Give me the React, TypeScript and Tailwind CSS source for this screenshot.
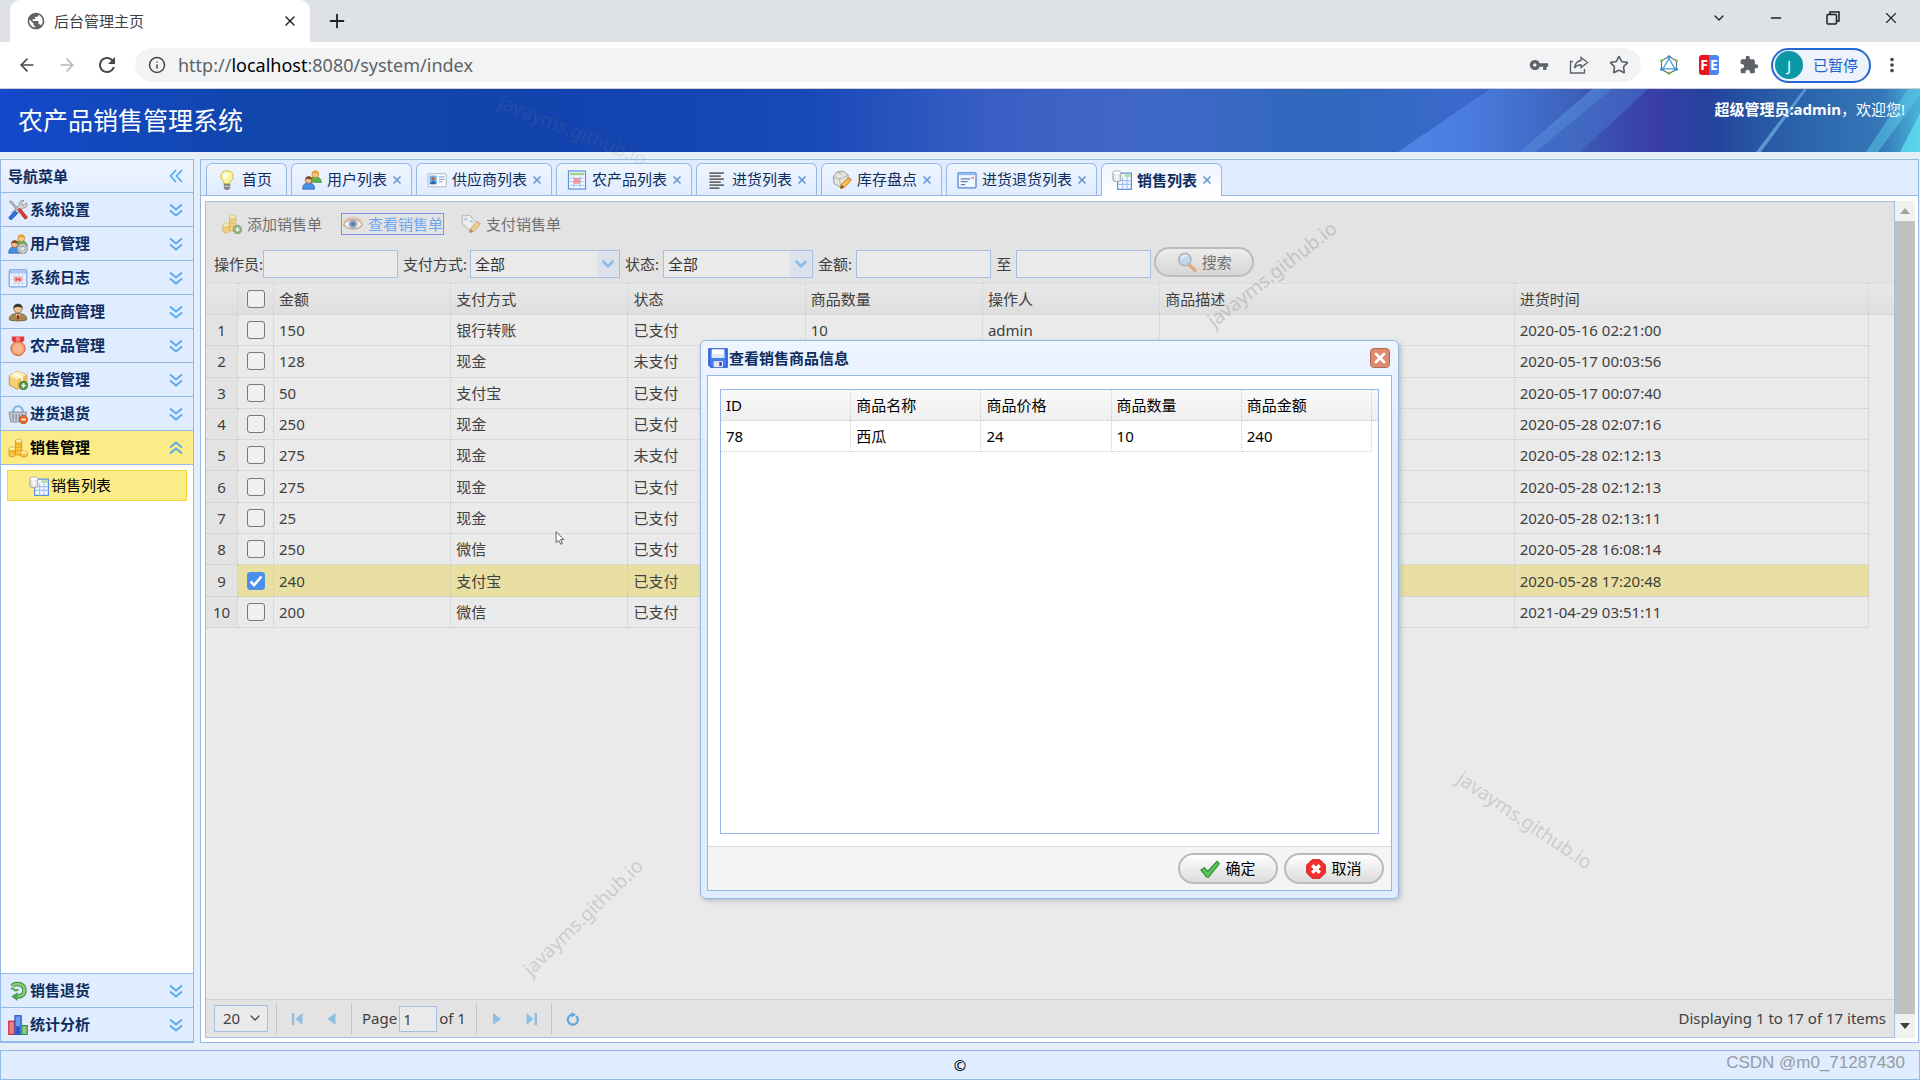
import React, { useState } from 'react';
import { ArrowLeft, ArrowRight, ChevronDown, Info, Minus, Plus, Star, X } from 'lucide-react';
import { MdMoreVert, MdPublic, MdRefresh, MdVpnKey } from 'react-icons/md';

type IconName =
  | 'tools' | 'usersGear' | 'calendar' | 'agent' | 'medal' | 'boxAdd' | 'basket' | 'coins' | 'tableDb'
  | 'recycle' | 'chart' | 'bulb' | 'users' | 'vcard' | 'report' | 'lines' | 'dbEdit' | 'form'
  | 'coinsAdd' | 'eye' | 'tagEdit' | 'search' | 'disk' | 'ok' | 'cancel';

const plusBadge = (
  <>
    <circle cx="12.4" cy="12.4" r="3.4" fill="#4f9a45" stroke="#2f6f2a" strokeWidth=".6" />
    <path d="M12.4 10.6v3.6M10.6 12.4h3.6" stroke="#fff" strokeWidth="1.2" />
  </>
);

const pencil = (
  <>
    <path d="M6.8 14.8l.8-3.2 5-5.2 2.5 2.2-5.2 5.3z" fill="#f7c050" stroke="#b9791e" strokeWidth=".7" />
    <path d="M6.8 14.8l.8-3.2 2.3 2.3z" fill="#8a5a2a" />
    <path d="M12.4 6.5l1.1-1 2.4 2.1-1 1.1z" fill="#e88a7a" />
  </>
);

const coinStacks = (
  <>
    <path d="M6 2.2c0-1.6 5-1.6 5 0v10.5c0 1.4-5 1.4-5 0z" fill="#f9c440" stroke="#d08e12" strokeWidth=".6" />
    <ellipse cx="8.5" cy="2.3" rx="2.4" ry="1.1" fill="#fff0a8" />
    <path d="M.8 8.4c0-1.6 5-1.6 5 0v5.6c0 1.4-5 1.4-5 0z" fill="#f9c440" stroke="#d08e12" strokeWidth=".6" />
    <ellipse cx="3.3" cy="8.5" rx="2.4" ry="1.1" fill="#fff0a8" />
    <path d="M6 5h5M6 7.5h5M6 10h5M.8 11h5" stroke="#e2a322" strokeWidth=".7" />
  </>
);

const people = (
  <>
    <path d="M6 9.6c0-3 2-4.2 4.4-4.2s5 1.2 5 4.6z" fill="#5fb648" stroke="#3a8a2a" strokeWidth=".6" />
    <circle cx="10.6" cy="3.4" r="2.7" fill="#f8c88c" stroke="#c07a20" strokeWidth=".6" />
    <path d="M7.9 3c.2-3.4 5.3-3.4 5.5 0-1.5.3-3.6-1-5.5 0z" fill="#e9a22c" />
    <path d="M.6 15.3c-.2-3.6 1.800-5 4.700-5s4.900 1.400 4.700 5z" fill="#4a90e2" stroke="#2460b0" strokeWidth=".6" />
    <circle cx="5.3" cy="8" r="2.7" fill="#f8c08c" stroke="#a05a30" strokeWidth=".6" />
    <path d="M2.600 7.600c.2-3.600 5.300-3.600 5.500 0-1.500.3-3.600-1-5.500 0z" fill="#8a4a2a" />
  </>
);

const icons: Record<IconName, React.ReactNode> = {
  tools: (
    <>
      <path d="M14.8 2.2l-2 2-1.6-.4-.4-1.6 2-1.8c-2-.7-4.2.9-3.7 3.2L3 10.2l2.4 2.4 6.8-6.3c2.2.3 3.8-2 2.6-4.1z" fill="#d5d5d5" stroke="#888" strokeWidth=".7" />
      <path d="M1 1.2l1.6-.6 5 6-1 .9z" fill="#bbb" stroke="#777" strokeWidth=".5" />
      <path d="M7.8 7.8l1.8-1.2 5.6 6.6c.6 1.4-1 2.5-2 1.7z" fill="#e23c32" stroke="#a01c18" strokeWidth=".5" />
      <path d="M5.6 8.6l2.2 2-4.8 5c-1.2.6-2.7-.9-2.2-2z" fill="#2f6fe0" stroke="#1a46a8" strokeWidth=".5" />
    </>
  ),
  usersGear: (
    <>
      {people}
      <circle cx="11.6" cy="11.6" r="3" fill="none" stroke="#9a9a9a" strokeWidth="2.4" />
      <circle cx="11.6" cy="11.6" r="4.2" fill="none" stroke="#9a9a9a" strokeWidth="1" strokeDasharray="1.6 1.6" />
      <circle cx="11.6" cy="11.6" r="2.9" fill="none" stroke="#ddd" strokeWidth="1" />
    </>
  ),
  calendar: (
    <>
      <rect x="1" y="1.5" width="14" height="13.5" rx="1" fill="#eef5ff" stroke="#7aa4de" />
      <path d="M1.5 2h13v2.500h-13z" fill="#a9c8f2" />
      <path d="M2.5 6.5h11M2.5 9.3h11M2.5 12.2h11M5.5 5v9M8.5 5v9M11.5 5v9" stroke="#bcd2f0" strokeWidth=".7" />
      <rect x="4.500" y="7" width="7" height="4" fill="#f6b0b0" />
      <path d="M6.500 7.500v3M9.500 7.500v3M6.500 9h3" stroke="#e45b5b" strokeWidth="1.2" />
    </>
  ),
  agent: (
    <>
      <path d="M1 14.2c0-3.4 2.5-5 7-5s7 1.6 7 5c-3 1.2-11 1.2-14 0z" fill="#a58a52" stroke="#6e5a2c" strokeWidth=".7" />
      <path d="M6 9.3l2 3.8 2-3.8z" fill="#e8dcc0" />
      <path d="M7.4 10h1.2l.4 3-1 1-1-1z" fill="#b02020" />
      <circle cx="8" cy="5.4" r="3.4" fill="#f3c094" stroke="#6a4020" strokeWidth=".5" />
      <path d="M4.3 5.2C3.8.2 12.2.2 11.7 5.2c-1.3-1.6-5.8-1.6-7.4 0z" fill="#3a3a3a" />
    </>
  ),
  medal: (
    <>
      <path d="M3 .3h10v3.2L10.5 5.5h-5L3 3.5z" fill="#e8343a" />
      <path d="M6.3.3h3.4v5H6.3z" fill="#ff7a7a" />
      <circle cx="8" cy="10" r="5.7" fill="#f59a6a" stroke="#d2643a" strokeWidth=".8" />
      <circle cx="8" cy="10" r="4" fill="#f8b48a" />
    </>
  ),
  boxAdd: (
    <>
      <path d="M1 4.5L8 .8l7 3.2v7.5l-7.5 4L1 12z" fill="#f6cf78" stroke="#c08a2a" strokeWidth=".7" />
      <path d="M1 4.5L8 .8 15 4 7.5 8z" fill="#fdeebc" />
      <path d="M7.5 8v7.5L15 11.5V4z" fill="#f0ba55" />
      <path d="M4.3 2.7l7 3.4v3" fill="none" stroke="#fff" strokeWidth="1.2" />
      {plusBadge}
    </>
  ),
  basket: (
    <>
      <path d="M4 7c0-7 8-7 8 0" fill="none" stroke="#7fb2d6" strokeWidth="1.6" />
      <path d="M.8 6.5h14l-1.3 7.8H2.2z" fill="#c3ccd6" stroke="#8592a2" strokeWidth=".8" />
      <path d="M4 8v5M6.5 8v5M9 8v5M11.5 8v5" stroke="#7d8a9a" strokeWidth=".9" />
      <circle cx="12.4" cy="12.4" r="3.3" fill="#ea6a2c" stroke="#b5431a" strokeWidth=".6" />
      <path d="M10.6 12.4h3.6" stroke="#fff" strokeWidth="1.3" />
    </>
  ),
  coins: (
    <>
      {coinStacks}
      <path d="M10 11.5c0-1.4 5.4-1.4 5.4 0v2.6c0 1.4-5.4 1.4-5.4 0z" fill="#f9c440" stroke="#d08e12" strokeWidth=".6" />
      <ellipse cx="12.7" cy="11.6" rx="2.5" ry="1" fill="#fff0a8" />
    </>
  ),
  tableDb: (
    <>
      <rect x="4.5" y="2.5" width="11" height="13" fill="#f4f9ff" stroke="#5f93dc" />
      <path d="M10 3.5h5v2h-5z" fill="#a9dba0" />
      <path d="M5 8.5h10M5 11.5h10M8.5 6v9M12 6v9" stroke="#9dc0ee" strokeWidth=".9" />
      <path d="M.7 2c0-1.6 6.300-1.600 6.300 0v6c0 1.700-6.300 1.700-6.300 0z" fill="#e2e2e2" stroke="#9a9a9a" strokeWidth=".7" />
      <ellipse cx="3.9" cy="2.1" rx="2.9" ry="1" fill="#fff" />
      <path d="M3.9 3.5v4.5" stroke="#fff" strokeWidth="1.5" />
    </>
  ),
  recycle: (
    <>
      <path d="M3.500 4.200C5.500 1.200 13.200 1.800 13.200 7.600c0 3.600-3.200 4.900-6.700 4.700" fill="none" stroke="#3d8f3c" strokeWidth="3.600" />
      <path d="M3.500 4.200C5.500 1.200 13.200 1.800 13.200 7.600c0 3.600-3.200 4.900-6.700 4.700" fill="none" stroke="#8ac880" strokeWidth="2" />
      <path d="M7.600 9v7L2.600 12.400z" fill="#4f9f4c" />
      <path d="M2.500 5.500l3.500 2 2.500-.3" fill="none" stroke="#5aa854" strokeWidth="1.800" />
    </>
  ),
  chart: (
    <>
      <rect x=".6" y="5" width="4.6" height="10.5" fill="#f08080" stroke="#c8303a" />
      <rect x="5.6" y=".6" width="4.9" height="14.9" fill="#6a9cf0" stroke="#2458c0" />
      <path d="M6.5 9h3v6h-3z" fill="#2a54c8" />
      <rect x="11" y="8.5" width="4.4" height="7" fill="#8fce84" stroke="#3d9140" />
    </>
  ),
  bulb: (
    <>
      <path d="M8 .6c-5.700 0-6 5.600-3.300 8 .7.700.8 1.500.9 2.400h4.800c.1-.9.2-1.700.9-2.400C14 6.200 13.700.6 8 .6z" fill="#fbf3a0" stroke="#c9b84a" strokeWidth=".8" />
      <ellipse cx="7" cy="4.4" rx="2" ry="2.4" fill="#fffde0" />
      <path d="M5.8 11.5h4.4v2.8L9 15.6H7l-1.2-1.3z" fill="#8b8b8b" stroke="#555" strokeWidth=".5" />
      <path d="M5.8 13h4.4" stroke="#ddd" strokeWidth=".7" />
    </>
  ),
  users: people,
  vcard: (
    <>
      <rect x=".8" y="3" width="14.6" height="10.4" rx=".8" fill="#fdfdfd" stroke="#b0b8c2" strokeWidth=".8" />
      <rect x="2" y="4.4" width="5.8" height="7" fill="#6eb0ec" />
      <circle cx="4.9" cy="7" r="1.4" fill="#b5683a" />
      <path d="M2.6 11.4c0-3.600 4.600-3.600 4.600 0z" fill="#2a64b4" />
      <path d="M9.5 5.5h4.500M9.5 7.5h4.500M9.5 9.5h3" stroke="#9ab0c8" strokeWidth=".9" />
    </>
  ),
  report: (
    <>
      <rect x="1.2" y=".8" width="13.6" height="14.4" fill="#f4f9ff" stroke="#5f93dc" />
      <path d="M2.5 2.2h11v2h-11z" fill="#9fd08e" />
      <path d="M2.5 6.5h11M2.5 9.3h11M2.5 12.2h11M5.5 5v9M10.5 5v9" stroke="#9dc0ee" strokeWidth=".8" />
      <rect x="5.5" y="6.5" width="5" height="4.5" fill="#f29a9a" />
    </>
  ),
  lines: (
    <path d="M2 2.500h11.500M2 4.900h9M2 7.300h11.500M2 9.700h9M2 12.100h11.500M2 14.500h8" stroke="#6c6c6c" strokeWidth="1.400" />
  ),
  dbEdit: (
    <>
      <path d="M1 5.500L4 1.600 9 .8l4 3.400-.5 6L7 14 1.800 11z" fill="#e6e6e0" stroke="#a09a8a" strokeWidth=".8" />
      <path d="M1 5.5l5 1.8 7-3.1M6 7.3L7 14M4 1.6l4 1.8" fill="none" stroke="#b5b0a2" strokeWidth=".8" />
      {pencil}
    </>
  ),
  form: (
    <>
      <rect x=".8" y="2.2" width="14.4" height="12" rx=".6" fill="#f2f8ff" stroke="#4f83d0" />
      <path d="M1.4 2.8h13.2v1.3H1.4z" fill="#8fb8ee" />
      <path d="M3 7h7.5M3 9.3h5.5M3 11.6h3.5" stroke="#5a7fb5" strokeWidth="1" />
      <rect x="11.4" y="5.4" width="2.2" height="2" fill="#f2a0a0" />
    </>
  ),
  coinsAdd: (
    <>
      {coinStacks}
      {plusBadge}
    </>
  ),
  eye: (
    <>
      <path d="M.5 8.3C3.5 3 12.5 3 15.5 8.3 12.5 13.2 3.5 13.2.5 8.3z" fill="#fff" stroke="#c08a5a" strokeWidth="1.2" />
      <path d="M.8 6C4 1.800 12 1.800 15.2 6" fill="none" stroke="#dcb48c" strokeWidth="1.2" />
      <circle cx="8" cy="8" r="3.5" fill="#5a88c8" />
      <circle cx="8" cy="8" r="1.6" fill="#14284a" />
    </>
  ),
  tagEdit: (
    <>
      <path d="M1 1.500l6-.5 7 7.500-5.800 6L1 7.500z" fill="#f5f5f2" stroke="#a8a8a0" strokeWidth=".9" />
      <circle cx="3.8" cy="4" r="1.3" fill="#8ac2e8" />
      <path d="M6 6l2.500-1.500 2 3z" fill="#8ac2e8" />
      {pencil}
    </>
  ),
  search: (
    <>
      <path d="M9.5 10l4.8 4.6" stroke="#e08a3a" strokeWidth="2.8" strokeLinecap="round" />
      <circle cx="6.3" cy="6" r="4.9" fill="#a9d2f8" stroke="#8a9cb4" strokeWidth="1.3" />
      <path d="M3.5 5.5c.5-2 2.5-3 4.5-2.3" fill="none" stroke="#fff" strokeWidth="1.2" />
    </>
  ),
  disk: (
    <>
      <path d="M.7.7h14.6v14.6H2.5L.7 13.7z" fill="#3f7fee" stroke="#1d4fc0" />
      <path d="M3 1h10v7H3z" fill="#fff" />
      <path d="M3 5h10v3H3z" fill="#dce8fa" />
      <path d="M4.5 10.5H12v4.8H4.5z" fill="#e6e2f2" />
      <path d="M9 11.300h2v3H9z" fill="#3a3ac8" />
    </>
  ),
  ok: (
    <path d="M.8 8.8l2.6-1.9 2.8 3L13.6 1.8l1.8 2L6.8 14.6H5.4z" fill="#5fc35a" stroke="#2c8a30" strokeWidth=".9" />
  ),
  cancel: (
    <>
      <path d="M4.8.6h6.4l4.2 4.2v6.4l-4.2 4.2H4.8L.6 11.2V4.8z" fill="#f2312e" stroke="#d01714" strokeWidth=".8" />
      <path d="M5 5l6 6M11 5l-6 6" stroke="#fff" strokeWidth="2.6" />
    </>
  ),
};

const Icon: React.FC<{ name: IconName; className?: string }> = ({ name, className = '' }) => (
  <svg viewBox="0 0 16 16" className={`w-5 h-5 shrink-0 ${className}`} aria-hidden="true">
    {icons[name]}
  </svg>
);

const Chevrons: React.FC<{ dir: 'down' | 'up' | 'left' }> = ({ dir }) => (
  <svg viewBox="0 0 14 14" className="w-3.5 h-3.5 shrink-0" fill="none" stroke="#58a9ea" strokeWidth="1.8" aria-hidden="true">
    {dir === 'down' && <path d="M1 1.5l6 5 6-5M1 7.5l6 5 6-5" />}
    {dir === 'up' && <path d="M1 6.5l6-5 6 5M1 12.5l6-5 6 5" />}
    {dir === 'left' && <path d="M7 1L1.5 7 7 13M13 1L7.5 7l5.5 6" />}
  </svg>
);

const topMenus: { icon: IconName; label: string }[] = [
  { icon: 'tools', label: '系统设置' },
  { icon: 'usersGear', label: '用户管理' },
  { icon: 'calendar', label: '系统日志' },
  { icon: 'agent', label: '供应商管理' },
  { icon: 'medal', label: '农产品管理' },
  { icon: 'boxAdd', label: '进货管理' },
  { icon: 'basket', label: '进货退货' },
];

const bottomMenus: { icon: IconName; label: string }[] = [
  { icon: 'recycle', label: '销售退货' },
  { icon: 'chart', label: '统计分析' },
];

const tabs: { icon: IconName; label: string; closable: boolean }[] = [
  { icon: 'bulb', label: '首页', closable: false },
  { icon: 'users', label: '用户列表', closable: true },
  { icon: 'vcard', label: '供应商列表', closable: true },
  { icon: 'report', label: '农产品列表', closable: true },
  { icon: 'lines', label: '进货列表', closable: true },
  { icon: 'dbEdit', label: '库存盘点', closable: true },
  { icon: 'form', label: '进货退货列表', closable: true },
  { icon: 'tableDb', label: '销售列表', closable: true },
];

const orders = [
  { amount: 150, pay: '银行转账', status: '已支付', count: '10', operator: 'admin', time: '2020-05-16 02:21:00' },
  { amount: 128, pay: '现金', status: '未支付', count: '', operator: '', time: '2020-05-17 00:03:56' },
  { amount: 50, pay: '支付宝', status: '已支付', count: '', operator: '', time: '2020-05-17 00:07:40' },
  { amount: 250, pay: '现金', status: '已支付', count: '', operator: '', time: '2020-05-28 02:07:16' },
  { amount: 275, pay: '现金', status: '未支付', count: '', operator: '', time: '2020-05-28 02:12:13' },
  { amount: 275, pay: '现金', status: '已支付', count: '', operator: '', time: '2020-05-28 02:12:13' },
  { amount: 25, pay: '现金', status: '已支付', count: '', operator: '', time: '2020-05-28 02:13:11' },
  { amount: 250, pay: '微信', status: '已支付', count: '', operator: '', time: '2020-05-28 16:08:14' },
  { amount: 240, pay: '支付宝', status: '已支付', count: '', operator: '', time: '2020-05-28 17:20:48' },
  { amount: 200, pay: '微信', status: '已支付', count: '', operator: '', time: '2021-04-29 03:51:11' },
];

const BrowserChrome = () => (
  <div className="shrink-0 bg-white border-b border-[#d0cfd4]">
    <div className="h-[42px] bg-[#dee1e6] flex items-end pl-2.5">
      <div className="w-[300px] h-[42px] bg-white rounded-t-[10px] flex items-center pl-4 pr-3 text-[15px] text-[#3c4043]">
        <MdPublic className="w-5 h-5 text-[#5f6368]" />
        <span className="ml-2 flex-1">后台管理主页</span>
        <button aria-label="关闭标签页"><X className="w-4 h-4 text-[#202124]" /></button>
      </div>
      <button aria-label="新标签页" className="h-[42px] ml-4"><Plus className="w-[22px] h-[22px] text-[#202124]" /></button>
      <div className="ml-auto self-start h-9 flex items-center gap-[41px] pr-5 text-[#202124]">
        <button aria-label="搜索标签页"><ChevronDown className="w-4 h-4" strokeWidth={2} /></button>
        <button aria-label="最小化"><Minus className="w-4 h-4" strokeWidth={2} /></button>
        <button aria-label="还原">
          <svg viewBox="0 0 16 16" className="w-4 h-4" fill="none" stroke="currentColor" strokeWidth="1.5">
            <rect x="2" y="4.5" width="9.5" height="9.5" rx="1" />
            <path d="M5 4.5V2h9v9h-2.5" />
          </svg>
        </button>
        <button aria-label="关闭"><X className="w-[18px] h-[18px]" strokeWidth={1.5} /></button>
      </div>
    </div>
    <div className="h-[46px] flex items-center pl-[17px] text-[#45494d]">
      <button aria-label="后退"><ArrowLeft className="w-5 h-5" /></button>
      <button aria-label="前进" className="ml-5"><ArrowRight className="w-5 h-5 text-[#b4b7ba]" /></button>
      <button aria-label="刷新" className="ml-[18px]"><MdRefresh className="w-6 h-6" /></button>
      <div className="ml-4 flex-1 h-[34px] rounded-full bg-[#f1f3f4] flex items-center pl-[13px] pr-3">
        <Info className="w-[18px] h-[18px]" />
        <div className="ml-3 flex-1 text-[18px] leading-6 text-[#5f6368]">
          http://<span className="text-black">localhost</span>:8080/system/index
        </div>
        <div className="flex items-center gap-5 text-[#5f6368]">
          <MdVpnKey className="w-5 h-5" />
          <svg viewBox="0 0 20 20" className="w-5 h-5" fill="none" stroke="currentColor" strokeWidth="1.4">
            <path d="M4 6.5H1.5V18h14v-4" />
            <path d="M12 2.5l6.5 5-6.5 5V9.7c-3 0-5 1-6.500 3.300.5-4.500 3-7 6.500-7.500z" />
          </svg>
          <Star className="w-5 h-5" />
        </div>
      </div>
      <div className="flex items-center ml-[18px]">
        <svg viewBox="0 0 20 20" className="w-5 h-5" fill="none">
          <path d="M10 1.5l7.500 4.300v8.500L10 18.500l-7.500-4.200V5.800z" stroke="#6a7480" strokeWidth="1.2" />
          <path d="M10 3.5l6 10.3H4z" stroke="#3fa0e0" strokeWidth="1.3" />
          <circle cx="10" cy="1.8" r="1.6" fill="#2a8fd8" />
          <circle cx="2.6" cy="5.8" r="1.5" fill="#78c04a" />
          <circle cx="17.4" cy="5.8" r="1.5" fill="#78c04a" />
          <circle cx="2.6" cy="14.2" r="1.5" fill="#2a8fd8" />
          <circle cx="17.4" cy="14.2" r="1.5" fill="#2a8fd8" />
          <circle cx="10" cy="18.2" r="1.6" fill="#78c04a" />
        </svg>
        <div className="ml-5 w-5 h-5 rounded-[3px] overflow-hidden flex text-[14px] leading-5 font-bold text-white text-center">
          <span className="w-1/2 bg-[#f0101c]">F</span>
          <span className="w-1/2 bg-[#4a86ee]">E</span>
        </div>
        <svg viewBox="0 0 24 24" className="ml-5 w-5 h-5" fill="#5f6368">
          <path d="M20.5 11H19V7c0-1.1-.9-2-2-2h-4V3.5C13 2.12 11.88 1 10.5 1S8 2.12 8 3.5V5H4c-1.1 0-1.990.9-1.990 2v3.800H3.500c1.490 0 2.700 1.210 2.700 2.700s-1.210 2.700-2.700 2.700H2V20c0 1.100.9 2 2 2h3.800v-1.500c0-1.490 1.210-2.700 2.700-2.700 1.490 0 2.700 1.210 2.700 2.700V22H17c1.100 0 2-.9 2-2v-4h1.500c1.380 0 2.500-1.120 2.500-2.500S21.880 11 20.500 11z" />
        </svg>
        <button className="ml-3 h-[35px] rounded-full border-2 border-[#2468d6] bg-[#eef2fa] flex items-center pl-0.5 pr-[11px] text-[15px] text-[#1a62d0]">
          <span className="w-7 h-7 rounded-full bg-[#0b98a5] text-white leading-7">J</span>
          <span className="ml-2.5">已暂停</span>
        </button>
        <button aria-label="菜单" className="ml-2.5 mr-[17px]"><MdMoreVert className="w-[22px] h-[22px]" /></button>
      </div>
    </div>
  </div>
);

const Header = () => (
  <header className="relative shrink-0 h-[63px] overflow-hidden">
    <svg viewBox="0 0 1920 63" preserveAspectRatio="none" className="absolute inset-0 w-full h-full" aria-hidden="true">
      <defs>
        <linearGradient id="sky" x1="0" x2="1">
          <stop offset="0" stopColor="#1449cc" />
          <stop offset=".13" stopColor="#1146ac" />
          <stop offset=".3" stopColor="#1243ae" />
          <stop offset=".42" stopColor="#1749b8" />
          <stop offset=".52" stopColor="#3a5fc4" />
          <stop offset=".6" stopColor="#4068c8" />
          <stop offset=".69" stopColor="#2f68bc" />
          <stop offset=".76" stopColor="#3a6acc" />
          <stop offset=".82" stopColor="#3a5cb4" />
          <stop offset=".86" stopColor="#3b3ea8" />
          <stop offset=".89" stopColor="#23439c" />
          <stop offset=".93" stopColor="#2a60a8" />
          <stop offset=".98" stopColor="#3577b8" />
          <stop offset="1" stopColor="#4ab4d8" />
        </linearGradient>
        <linearGradient id="beam" x1="0" x2="1">
          <stop offset="0" stopColor="#5b93f4" stopOpacity=".7" />
          <stop offset="1" stopColor="#5b93f4" stopOpacity="0" />
        </linearGradient>
      </defs>
      <rect width="1920" height="63" fill="url(#sky)" />
      <path d="M1490 0h110l-80 63h-122z" fill="url(#beam)" />
      <path d="M1592 0h20l-76 63h-16z" fill="#5c9ae6" opacity=".5" />
      <path d="M1612 0h36l-68 63h-44z" fill="#4878d0" opacity=".5" />
      <path d="M1804 0h3l-46 63h-5z" fill="#6fb0e0" opacity=".7" />
      <path d="M1908 0h12v6l-42 57h-12z" fill="#5ccbe8" opacity=".5" />
      <path d="M1920 24v39h-20z" fill="#5fe6f4" opacity=".7" />
    </svg>
    <div className="relative flex justify-between pl-[18px] pr-[15px] text-white">
      <h1 className="text-[25px] leading-[63px]">农产品销售管理系统</h1>
      <div className="pt-2.5 text-[15px] leading-5"><strong>超级管理员:admin</strong>，欢迎您!</div>
    </div>
  </header>
);

const MenuHeader: React.FC<{ icon: IconName; label: string; active?: boolean }> = ({ icon, label, active }) => (
  <button
    className={`w-full h-[34px] shrink-0 flex items-center pl-[7px] pr-2.5 border-b border-[#95b8e7] text-[15px] font-bold ${
      active ? 'bg-[#fbec88] text-black' : 'bg-[#e0ecff] text-[#0e2d5f]'
    }`}
  >
    <Icon name={icon} />
    <span className="ml-0.5 flex-1 text-left">{label}</span>
    <Chevrons dir={active ? 'up' : 'down'} />
  </button>
);

const Sidebar = () => (
  <nav className="w-[194px] shrink-0 flex flex-col border border-[#95b8e7] bg-white">
    <div className="h-[33px] shrink-0 flex items-center justify-between pl-[7px] pr-2.5 bg-gradient-to-b from-[#eff5ff] to-[#e0ecff] border-b border-[#95b8e7] text-[15px] font-bold text-[#0e2d5f]">
      导航菜单
      <button aria-label="收起菜单"><Chevrons dir="left" /></button>
    </div>
    {topMenus.map((m) => (
      <MenuHeader key={m.label} icon={m.icon} label={m.label} />
    ))}
    <MenuHeader icon="coins" label="销售管理" active />
    <div className="flex-1 px-[6px] pt-[5px]">
      <a href="#sales" className="h-[31px] flex items-center pl-[21px] bg-[#fbec88] border border-[#f3d737] text-[15px] text-black">
        <Icon name="tableDb" />
        <span className="ml-0.5">销售列表</span>
      </a>
    </div>
    <div className="border-t border-[#95b8e7]">
      {bottomMenus.map((m) => (
        <MenuHeader key={m.label} icon={m.icon} label={m.label} />
      ))}
    </div>
  </nav>
);

const TabBar = () => (
  <div className="h-[36px] shrink-0 flex items-end gap-1 pl-[5px] bg-[#e0ecff] border-b border-[#95b8e7]">
    {tabs.map((tab) => {
      const active = tab.label === '销售列表';
      return (
        <div
          key={tab.label}
          className={`flex items-center pl-[10px] rounded-t-md border border-b-0 border-[#95b8e7] text-[15px] text-[#0e2d5f] ${
            tab.closable ? 'pr-[8px]' : 'pr-[14px]'
          } ${active ? 'h-[33px] -mb-px bg-gradient-to-b from-[#eff5ff] to-white font-bold' : 'h-[32px] bg-gradient-to-b from-[#eff5ff] to-[#e0ecff]'}`}
        >
          <button className="flex items-center">
            <Icon name={tab.icon} />
            <span className="ml-[5px] whitespace-nowrap">{tab.label}</span>
          </button>
          {tab.closable && (
            <button aria-label={`关闭${tab.label}`} className="ml-[4px]">
              <X className="w-3 h-3 text-[#6b9ad6]" strokeWidth={3.5} />
            </button>
          )}
        </div>
      );
    })}
  </div>
);

const Checkbox: React.FC<{ label: string; checked: boolean; onChange: () => void }> = ({ label, checked, onChange }) => (
  <label className="grid place-items-center">
    <input
      type="checkbox"
      aria-label={label}
      checked={checked}
      onChange={onChange}
      className="peer col-start-1 row-start-1 appearance-none w-[18px] h-[18px] rounded-[3px] border border-[#777] bg-[#f0f0f0] checked:bg-[#4a90ea] checked:border-[#4a90ea]"
    />
    <svg viewBox="0 0 16 16" className="col-start-1 row-start-1 w-4 h-4 invisible peer-checked:visible pointer-events-none">
      <path d="M2.5 8.5l3.6 3.6L13.5 3.5" fill="none" stroke="#fff" strokeWidth="2.6" />
    </svg>
  </label>
);

const ComboBox: React.FC<{ id: string }> = ({ id }) => (
  <span className="relative w-[150px] h-[28px] border border-[#a4bfe0] bg-[#eaeaea] flex">
    <select id={id} defaultValue="全部" className="appearance-none w-full pl-[4px] text-[15px] text-[#333] bg-transparent">
      <option>全部</option>
    </select>
    <span className="absolute right-0 inset-y-0 w-[22px] bg-[#dce2ec] grid place-items-center pointer-events-none">
      <ChevronDown className="w-[18px] h-[18px] text-[#8dbde6]" strokeWidth={3.5} />
    </span>
  </span>
);

const field = 'w-[135px] h-[28px] border border-[#a4bfe0] bg-[#eaeaea]';

const Toolbar = () => (
  <div className="h-[81px] shrink-0 bg-[#e3e3e3] text-[15px] text-[#404040]">
    <div className="h-11 flex items-center pl-4 text-[#707070]">
      <button className="flex items-center gap-[5px]"><Icon name="coinsAdd" className="opacity-60" />添加销售单</button>
      <button className="ml-[19px] h-[22px] pl-px flex items-center gap-[5px] border border-[#7f8fe8] text-[#6fa8f2]">
        <Icon name="eye" className="opacity-60" />查看销售单
      </button>
      <button className="ml-[17px] flex items-center gap-[5px]"><Icon name="tagEdit" className="opacity-60" />支付销售单</button>
    </div>
    <div className="h-9 flex items-center pl-[8px]">
      <label htmlFor="operator">操作员:</label>
      <input id="operator" className={field} />
      <label htmlFor="pay" className="ml-[5px] mr-[3px]">支付方式:</label>
      <ComboBox id="pay" />
      <label htmlFor="status" className="ml-[5px] mr-[4px]">状态:</label>
      <ComboBox id="status" />
      <label htmlFor="min" className="ml-[5px] mr-[4px]">金额:</label>
      <input id="min" className={field} />
      <label htmlFor="max" className="mx-[5px]">至</label>
      <input id="max" className={field} />
      <button className="ml-[3px] mb-1 w-[100px] h-[30px] rounded-full border-2 border-[#bcbcbc] bg-gradient-to-b from-[#ededed] to-[#d6d6d6] flex items-center justify-center gap-[5px] text-[#707070]">
        <Icon name="search" className="opacity-60" />搜索
      </button>
    </div>
  </div>
);

const line = 'border-r border-b border-dotted border-[#c8c8c8]';
const cell = `${line} pl-[5px] text-left font-normal`;

const OrderTable = () => {
  const [selected, setSelected] = useState<number[]>([8]);
  const allChecked = selected.length === orders.length;
  const toggle = (i: number) =>
    setSelected((prev) => (prev.includes(i) ? prev.filter((n) => n !== i) : [...prev, i]));
  const toggleAll = () => setSelected(allChecked ? [] : orders.map((_, i) => i));

  return (
    <table className="w-full h-[345px] table-fixed border-separate border-spacing-0 text-[15px] leading-5 text-[#404040]">
      <colgroup>
        <col className="w-[32px]" />
        <col className="w-[36px]" />
        <col className="w-[10.5%]" />
        <col className="w-[10.5%]" />
        <col className="w-[10.5%]" />
        <col className="w-[10.5%]" />
        <col className="w-[10.5%]" />
        <col className="w-[21%]" />
        <col className="w-[21%]" />
        <col />
      </colgroup>
      <thead>
        <tr className="h-8 bg-gradient-to-b from-[#e8e8e8] to-[#dedede] [&>th]:border-t [&>th]:border-[#d0d0d0]">
          <th className={line} />
          <th className={line}>
            <Checkbox label="全选" checked={allChecked} onChange={toggleAll} />
          </th>
          <th className={cell}>金额</th>
          <th className={cell}>支付方式</th>
          <th className={cell}>状态</th>
          <th className={cell}>商品数量</th>
          <th className={cell}>操作人</th>
          <th className={cell}>商品描述</th>
          <th className={cell}>进货时间</th>
          <th className="border-b border-dotted" />
        </tr>
      </thead>
      <tbody>
        {orders.map((o, i) => {
          const on = selected.includes(i);
          const bg = on ? 'bg-[#e9dfa2]' : '';
          return (
            <tr key={i}>
              <td className={`${line} bg-[#e3e3e3] text-center`}>{i + 1}</td>
              <td className={`${line} ${bg}`}>
                <Checkbox label={`选择第${i + 1}行`} checked={on} onChange={() => toggle(i)} />
              </td>
              <td className={`${cell} ${bg}`}>{o.amount}</td>
              <td className={`${cell} ${bg}`}>{o.pay}</td>
              <td className={`${cell} ${bg}`}>{o.status}</td>
              <td className={`${cell} ${bg}`}>{o.count}</td>
              <td className={`${cell} ${bg}`}>{o.operator}</td>
              <td className={`${cell} ${bg}`} />
              <td className={`${cell} ${bg}`}>{o.time}</td>
              <td />
            </tr>
          );
        })}
      </tbody>
    </table>
  );
};

const Separator = () => <span className="w-px h-[30px] bg-[#c4c4c4]" />;

const Pager = () => (
  <div className="h-[38px] shrink-0 flex items-center pl-2 pr-2 bg-[#e3e3e3] border-t border-[#d0d0d0] text-[15px] text-[#404040]">
    <span className="relative w-[54px] h-[27px] border border-[#a4bfe0] bg-[#eaeaea] flex">
      <select aria-label="每页条数" defaultValue="20" className="appearance-none w-full pl-2 bg-transparent">
        <option>20</option>
      </select>
      <ChevronDown className="absolute right-1 top-1 w-4 h-4 pointer-events-none" strokeWidth={1.8} />
    </span>
    <span className="ml-2 flex items-center gap-[14px] text-[#8fc0e4]">
      <Separator />
      <button aria-label="首页">
        <svg viewBox="0 0 12 12" className="w-3 h-3" fill="currentColor"><path d="M1 0h2.200v12H1zM11.500 0v12L4.500 6z" /></svg>
      </button>
      <button aria-label="上一页" className="ml-2">
        <svg viewBox="0 0 12 12" className="w-3 h-3" fill="currentColor"><path d="M10.500 0v12L2.500 6z" /></svg>
      </button>
      <Separator />
    </span>
    <label htmlFor="page" className="ml-[10px] mr-0.5">Page</label>
    <input id="page" defaultValue="1" className="w-[38px] h-[26px] border border-[#a4bfe0] bg-[#eaeaea] pl-[3px]" />
    <span className="ml-0.5">of 1</span>
    <span className="ml-[10px] flex items-center gap-[14px] text-[#8fc0e4]">
      <Separator />
      <button aria-label="下一页">
        <svg viewBox="0 0 12 12" className="w-3 h-3" fill="currentColor"><path d="M2 0v12l8-6z" /></svg>
      </button>
      <button aria-label="末页" className="ml-2">
        <svg viewBox="0 0 12 12" className="w-3 h-3" fill="currentColor"><path d="M9.5 0H12v12H9.5zM1.5 0v12l7-6z" /></svg>
      </button>
      <Separator />
      <button aria-label="刷新">
        <svg viewBox="0 0 14 14" className="w-3.5 h-3.5" fill="none" stroke="#62a8da" strokeWidth="2.2">
          <path d="M10.2 4a5 5 0 1 1-4-1.300" />
          <path d="M5.500 0v5.600l4.500-2.800z" fill="#62a8da" stroke="none" />
        </svg>
      </button>
    </span>
    <span className="ml-auto">Displaying 1 to 17 of 17 items</span>
  </div>
);

const Scrollbar = () => (
  <div className="w-5 shrink-0 flex flex-col bg-[#f1f1f1]" aria-hidden="true">
    <div className="h-5 grid place-items-center">
      <svg viewBox="0 0 10 6" className="w-2.5 h-1.5"><path d="M0 6l5-6 5 6z" fill="#a3a3a3" /></svg>
    </div>
    <div className="flex-1 bg-[#c1c1c1]" />
    <div className="h-6 grid place-items-center">
      <svg viewBox="0 0 10 6" className="w-2.5 h-1.5"><path d="M0 0l5 6 5-6z" fill="#404040" /></svg>
    </div>
  </div>
);

const dialogCell = 'border-r border-b border-dotted border-[#ccc] pl-[5px] text-left font-normal';

const pill = 'w-[100px] h-[31px] rounded-full border-2 border-[#bbb] bg-gradient-to-b from-white to-[#dcdcdc] flex items-center justify-center gap-[5px]';

const DetailDialog = () => (
  <div
    role="dialog"
    aria-label="查看销售商品信息"
    className="absolute left-[700px] top-[340px] w-[699px] h-[559px] flex flex-col px-[6px] pb-[7px] rounded-md border border-[#95b8e7] bg-gradient-to-b from-[#eff5ff] to-[#e0ecff] to-20% shadow-[2px_2px_5px_#bbb] text-[15px] text-black"
  >
    <div className="h-[34px] shrink-0 flex items-center pl-px pr-0.5">
      <Icon name="disk" />
      <h2 className="ml-px flex-1 font-bold text-[#0e2d5f]">查看销售商品信息</h2>
      <button aria-label="关闭" className="w-5 h-5 rounded border border-[#b06a52] bg-[#df8b70] grid place-items-center">
        <X className="w-4 h-4 text-white" strokeWidth={4} />
      </button>
    </div>
    <div className="flex-1 flex flex-col border border-[#95b8e7] bg-white">
      <div className="flex-1 mx-3 mt-[13px] mb-[12px] border border-[#95b8e7]">
        <table className="w-full table-fixed border-separate border-spacing-0 leading-5">
          <colgroup>
            <col />
            <col />
            <col />
            <col />
            <col />
            <col className="w-[6px]" />
          </colgroup>
          <thead>
            <tr className="h-[31px] bg-gradient-to-b from-[#f9f9f9] to-[#efefef]">
              <th className={dialogCell}>ID</th>
              <th className={dialogCell}>商品名称</th>
              <th className={dialogCell}>商品价格</th>
              <th className={dialogCell}>商品数量</th>
              <th className={dialogCell}>商品金额</th>
              <th className="border-b border-dotted border-[#ccc]" />
            </tr>
          </thead>
          <tbody>
            <tr className="h-[31px]">
              <td className={dialogCell}>78</td>
              <td className={dialogCell}>西瓜</td>
              <td className={dialogCell}>24</td>
              <td className={dialogCell}>10</td>
              <td className={dialogCell}>240</td>
              <td />
            </tr>
          </tbody>
        </table>
      </div>
      <div className="h-[44px] shrink-0 flex items-center justify-end gap-[6px] pr-[7px] bg-[#f4f4f4] border-t border-[#ddd]">
        <button className={pill}><Icon name="ok" />确定</button>
        <button className={pill}><Icon name="cancel" />取消</button>
      </div>
    </div>
  </div>
);

const watermarks = [
  'left-[1193px] top-[262px] -rotate-38 opacity-35',
  'left-[1446px] top-[808px] rotate-34 opacity-30',
  'left-[504px] top-[905px] -rotate-44 opacity-30',
  'left-[494px] top-[118px] rotate-22 opacity-15',
];

export default function App() {
  return (
    <div className="relative h-screen flex flex-col overflow-hidden bg-[#e6eef8] font-['Noto_Sans','Noto_Sans_CJK_SC',sans-serif]">
      <BrowserChrome />
      <Header />
      <main className="flex-1 min-h-0 flex gap-[6px] pt-[7px] pb-[7px] pr-px">
        <Sidebar />
        <section className="flex-1 min-w-0 flex flex-col border border-[#95b8e7] bg-white">
          <TabBar />
          <div className="flex-1 min-h-0 flex pl-1 pr-[3px] pt-[5px] pb-1">
            <div className="flex-1 min-w-0 flex flex-col border border-[#a4bfe0] bg-[#eaeaea]">
              <Toolbar />
              <div className="flex-1 min-h-0"><OrderTable /></div>
              <Pager />
            </div>
            <Scrollbar />
          </div>
        </section>
      </main>
      <footer className="relative h-[30px] shrink-0 flex items-center justify-center border border-[#95b8e7] bg-[#e0ecff] text-[15px] text-black">
        ©
        <span className="absolute right-3.5 bottom-1 font-['Liberation_Sans',sans-serif] text-[17px] leading-6 text-[#969ba2]">CSDN @m0_71287430</span>
      </footer>

      {watermarks.map((pos) => (
        <span key={pos} className={`absolute text-[19px] leading-6 text-[#888] pointer-events-none ${pos}`}>javayms.github.io</span>
      ))}
      <DetailDialog />
      <svg viewBox="0 0 12 18" className="absolute left-[555px] top-[531px] w-2.5 h-3.5 pointer-events-none" aria-hidden="true">
        <path d="M1 1v14l3.5-3 2.3 5 2.2-1-2.2-5H11z" fill="#fff" stroke="#555" strokeWidth="1.2" />
      </svg>
    </div>
  );
}
